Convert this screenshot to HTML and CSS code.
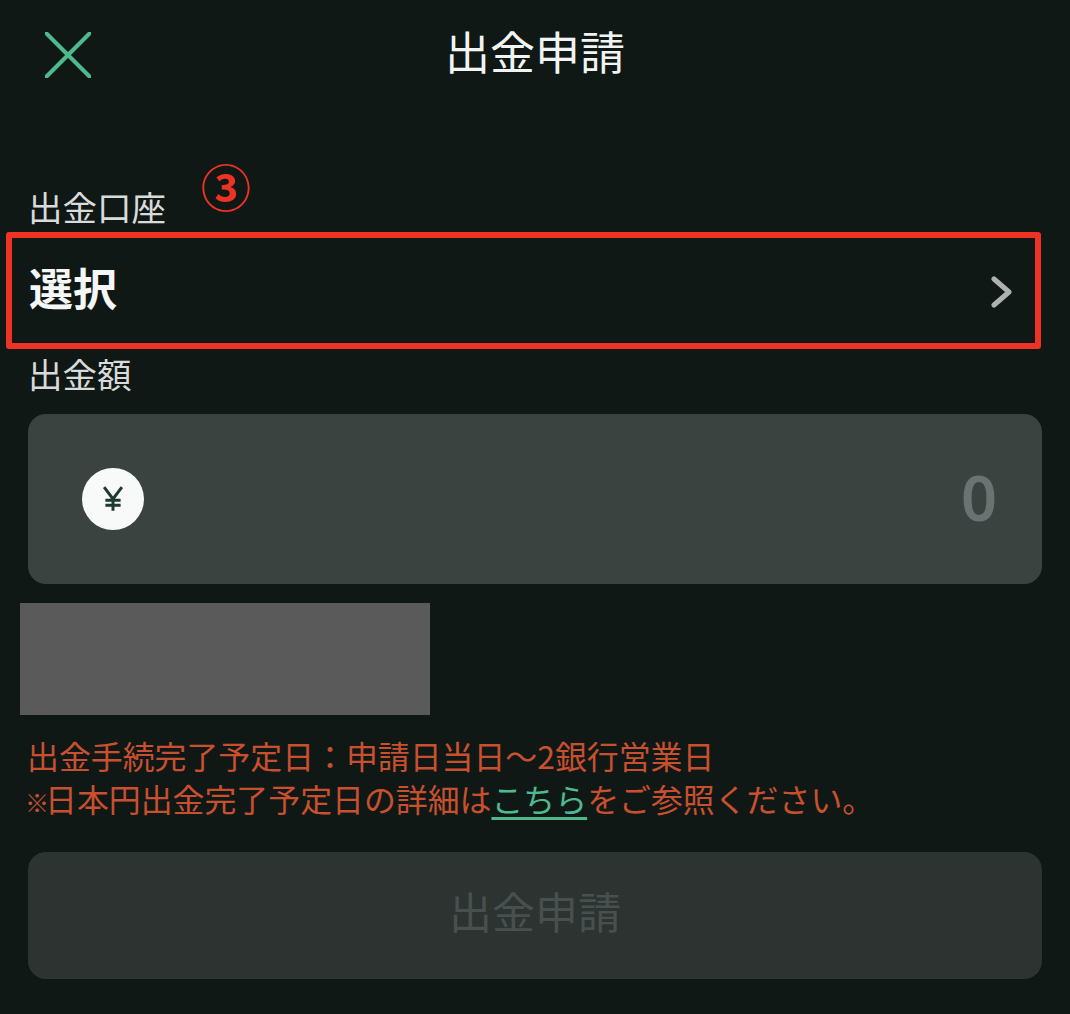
FILE: index.html
```html
<!DOCTYPE html>
<html lang="ja">
<head>
<meta charset="utf-8">
<title>出金申請</title>
<link rel="stylesheet" href="styles.css">
</head>
<body>
<main class="screen">
  <header class="header">
    <svg class="close" viewBox="0 0 46 46" aria-hidden="true"><path d="M1.5 1.5 44.5 44.5M44.5 1.5 1.5 44.5"/></svg>
    <h1 class="title">出金申請</h1>
  </header>
  <section class="account">
    <div class="label account-label">出金口座</div>
    <span class="step">③</span>
    <div class="select">
      <span class="select-text">選択</span>
      <svg class="chevron" viewBox="0 0 22 32" aria-hidden="true"><path d="M4 3 19 16 4 29"/></svg>
    </div>
  </section>
  <div class="label amount-label">出金額</div>
  <div class="amount">
    <span class="yen"><svg viewBox="0 0 26 32" aria-hidden="true"><path d="M2.5 2 13 16 23.5 2M13 16V30M4 17.5H22M4 23.5H22"/></svg></span>
    <span class="zero">0</span>
  </div>
  <div class="redacted"></div>
  <p class="notice"><span class="notice-line">出金手続完了予定日：申請日当日〜2銀行営業日</span><span class="notice-line"><span class="mark">※</span>日本円出金完了予定日の詳細は<a class="link" href="#">こちら</a>をご参照ください。</span></p>
  <button class="submit" type="button">出金申請</button>
</main>
</body>
</html>
```
FILE: styles.css
```css
* { box-sizing: border-box; }
html, body { margin: 0; height: 100%; }
body {
  background: #101816;
  font-family: "Noto Sans CJK JP", "Noto Sans", sans-serif;
  overflow: hidden;
}
.screen { display: flex; flex-direction: column; padding: 0 28px; height: 1014px; }
.header { position: relative; height: 108px; display: flex; align-items: center; justify-content: center; flex: none; padding-bottom: 6px; }
.close { position: absolute; left: 17px; top: 32px; width: 46px; height: 46px; fill: none; stroke: #4fb98e; stroke-width: 4; stroke-linecap: round; }
.title { margin: 0; font-size: 45px; line-height: 56px; font-weight: 400; color: #f2f4f3; }
.account { position: relative; margin-top: 78px; }
.label { font-size: 34.5px; line-height: 40px; color: #d8dbda; }
.account-label { height: 46px; }
.step { position: absolute; left: 173px; top: -31px; font-size: 50px; line-height: 60px; font-weight: 700; color: #ee3224; }
.select {
  margin: 0 0 0 -22px;
  width: 1035px;
  height: 117px;
  border: 6px solid #ee3224;
  border-radius: 3px;
  display: flex;
  align-items: center;
  justify-content: space-between;
  padding: 0 23px 8px 17px;
}
.select-text { font-size: 44px; line-height: 56px; font-weight: 700; color: #f5f6f6; }
.chevron { width: 22px; height: 32px; fill: none; stroke: #aeb1b0; stroke-width: 5; stroke-linecap: round; stroke-linejoin: round; margin-top: 11px; }
.amount-label { margin-top: 4px; height: 61px; }
.amount {
  height: 170px;
  flex: none;
  background: #3b4341;
  border-radius: 18px;
  display: flex;
  align-items: center;
  justify-content: space-between;
  padding: 0 45px 0 54px;
}
.yen { width: 62px; height: 62px; border-radius: 50%; background: #f8faf9; display: flex; align-items: center; justify-content: center; }
.yen svg { width: 22px; height: 30px; fill: none; stroke: #1d3a33; stroke-width: 3.5; }
.zero { font-size: 63px; line-height: 70px; font-weight: 600; color: #6b7272; font-family: "Noto Sans", sans-serif; margin-bottom: 5px; }
.redacted { width: 410px; height: 112px; margin: 19px 0 0 -8px; background: #5a5a5a; flex: none; }
.notice { margin: 19px 0 0 -1px; font-size: 31.9px; color: #c9502f; white-space: nowrap; }
.notice-line { display: block; height: 43px; line-height: 43px; }
.mark { font-size: 24px; line-height: 1; letter-spacing: -4px; margin-left: -2px; font-weight: 700; }
.link { color: #4fb98e; text-decoration: underline; text-underline-offset: 5px; text-decoration-thickness: 3px; }
.submit {
  margin-top: 32px;
  height: 127px;
  flex: none;
  border: 0;
  border-radius: 18px;
  background: #2d3331;
  color: #47504e;
  padding: 0 0 12px;
  font: 400 43px/56px "Noto Sans CJK JP", sans-serif;
}
```
